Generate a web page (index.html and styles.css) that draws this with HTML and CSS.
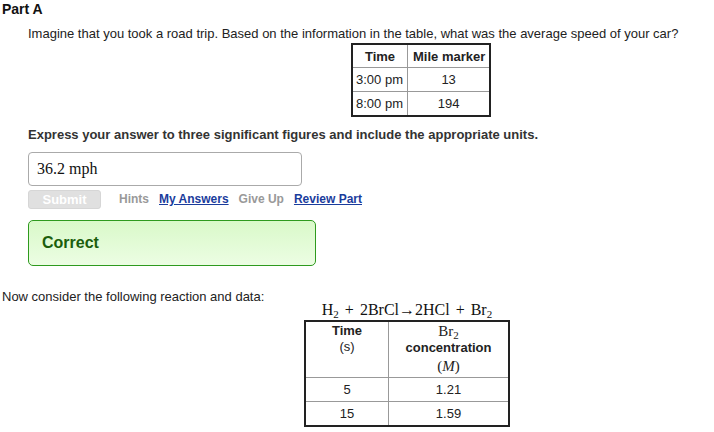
FILE: index.html
```html
<!DOCTYPE html>
<html>
<head>
    <title>Part A</title>
    <link rel="stylesheet" href="styles.css">
</head>
<body>
    <h2 class="part-title">Part A</h2>

    <div class="part-body">
        <p class="question">Imagine that you took a road trip. Based on the information in the table, what was the average speed of your car?</p>

        <table class="data-table trip-table">
            <tr><th>Time</th><th class="wide">Mile marker</th></tr>
            <tr><td class="left">3:00 pm</td><td>13</td></tr>
            <tr><td class="left">8:00 pm</td><td>194</td></tr>
        </table>

        <p class="instructions">Express your answer to three significant figures and include the appropriate units.</p>

        <div class="answer-box">36.2 mph</div>

        <div class="answer-actions">
            <button class="submit-btn" disabled>Submit</button>
            <span class="action muted">Hints</span>
            <a class="action link" href="#">My Answers</a>
            <span class="action muted">Give Up</span>
            <a class="action link" href="#">Review Part</a>
        </div>

        <div class="feedback correct">Correct</div>
    </div>

    <p class="followup">Now consider the following reaction and data:</p>

    <table class="data-table rate-table">
        <caption class="equation">H<sub>2</sub> + 2BrCl&rarr;2HCl + Br<sub>2</sub></caption>
        <tr>
            <th class="time-col">Time<br><span class="unit">(s)</span></th>
            <th><span class="math">Br<sub>2</sub></span><br>concentration<br><span class="math tall">(<i>M</i>)</span></th>
        </tr>
        <tr><td>5</td><td>1.21</td></tr>
        <tr><td>15</td><td>1.59</td></tr>
    </table>
</body>
</html>
```

FILE: styles.css
```css
body {
    margin: 0;
    padding: 0 2px;
    font-family: 'Liberation Sans', Arial, sans-serif;
    font-size: 13px;
    color: #222;
    background: #fff;
}

.part-title {
    margin: 0;
    padding-top: 1px;
    font-size: 14px;
    line-height: 16px;
    color: #111;
}

.part-body {
    padding-left: 26px;
}

.question {
    margin: 9px 0 1px;
    line-height: 16px;
}

/* tables */
.data-table {
    border-collapse: collapse;
    border: 2px solid #222;
    font-size: 13px;
}

.data-table th,
.data-table td {
    border: 1px solid #999;
    text-align: center;
    color: #222;
}

.trip-table {
    margin-left: 323px;
}

.trip-table th {
    height: 22px;
    padding: 0 3px;
}

.trip-table th.wide {
    padding: 0 4px 0 5px;
}

.trip-table td {
    height: 23px;
    padding: 0 4px;
}

.trip-table td.left {
    text-align: left;
    padding: 0 4px 0 3px;
}

.instructions {
    margin: 10px 0 0;
    font-weight: bold;
    font-size: 13px;
    line-height: 16px;
    color: #333;
}

.answer-box {
    box-sizing: border-box;
    width: 274px;
    height: 34px;
    margin-top: 9px;
    padding: 0 8px;
    border: 1px solid #aaa;
    border-radius: 4px;
    font-family: 'Liberation Serif', 'Times New Roman', serif;
    font-size: 16px;
    line-height: 32px;
    color: #111;
}

.answer-actions {
    display: flex;
    align-items: center;
    height: 19px;
    margin-top: 4px;
    font-size: 12px;
    font-weight: bold;
    line-height: 19px;
}

.submit-btn {
    box-sizing: border-box;
    width: 73px;
    height: 19px;
    margin-right: 18px;
    padding: 0;
    border: 1px solid #d6d6d6;
    border-radius: 3px;
    background: #e0e0e0;
    color: #fff;
    font-family: inherit;
    font-size: 13px;
    font-weight: bold;
    line-height: 17px;
}

.action {
    margin-right: 10px;
}

.muted {
    color: #999;
}

.link {
    color: #1a3c9c;
    text-decoration: underline;
}

.feedback {
    box-sizing: border-box;
    width: 288px;
    height: 46px;
    margin-top: 11px;
    padding: 0 13px;
    border: 1px solid #2e9a1e;
    border-radius: 5px;
    font-size: 16px;
    font-weight: bold;
    line-height: 44px;
}

.feedback.correct {
    background: linear-gradient(#d9f9c9, #ecfde3);
    color: #1b5e0c;
}

.followup {
    margin: 23px 0 -2px;
    line-height: 16px;
}

.rate-table {
    margin: 0 0 0 302px;
    width: 206px;
}

.equation {
    padding-bottom: 3px;
    font-family: 'Liberation Serif', 'Times New Roman', serif;
    font-size: 16px;
    line-height: 14px;
    color: #111;
    white-space: nowrap;
    word-spacing: 2px;
}

.equation sub,
.rate-table sub {
    font-size: 11px;
    vertical-align: -3px;
    line-height: 0;
}

.rate-table th {
    height: 52px;
    vertical-align: top;
    padding: 1px 4px 0;
    line-height: 16px;
}

.rate-table th.time-col {
    width: 74px;
}

.rate-table td {
    height: 23px;
    padding: 0;
}

.unit {
    font-weight: normal;
}

.math {
    font-weight: normal;
    font-family: 'Liberation Serif', 'Times New Roman', serif;
    font-size: 15px;
    line-height: 16px;
}

.math.tall {
    line-height: 21px;
}
```
